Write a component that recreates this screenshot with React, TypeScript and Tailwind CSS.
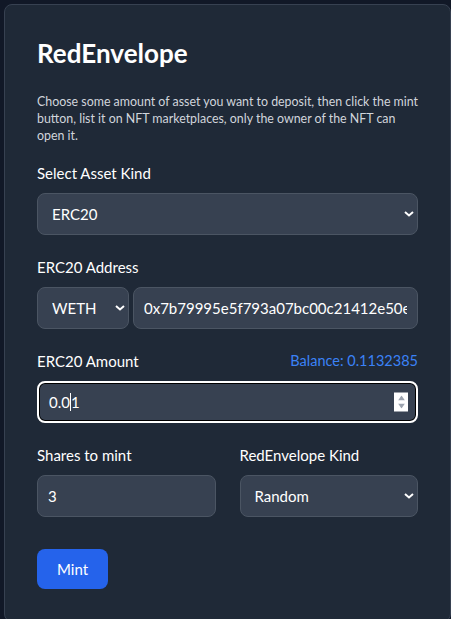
import React from 'react';

const font = { fontFamily: 'Lato, "Open Sans", sans-serif' };

const Chevron = () => (
  <svg className="pointer-events-none absolute right-1 top-1/2 -translate-y-1/2" width="10" height="6" viewBox="0 0 10 6">
    <path d="M1 1 L5 4.5 L9 1" fill="none" stroke="white" strokeWidth="2" />
  </svg>
);

const Spinner = () => (
  <div className="pointer-events-none absolute right-2.5 top-1/2 -translate-y-1/2 w-[14px] h-[19px] bg-white flex flex-col items-center justify-center gap-[3px]">
    <svg width="7" height="5" viewBox="0 0 7 5"><path d="M3.5 0 L7 5 L0 5 Z" fill="#9ca3af" /></svg>
    <svg width="7" height="5" viewBox="0 0 7 5"><path d="M0 0 L7 0 L3.5 5 Z" fill="#9ca3af" /></svg>
  </div>
);

const field = 'block w-full bg-[#374151] border border-[#4b5563] text-white text-[15px] leading-6 rounded-lg py-2 outline-none';
const label = 'block mb-2 text-[15px] leading-6 text-white';

const App: React.FC = () => {
  return (
    <div className="min-h-screen bg-[#111827] pt-1 pl-1" style={font}>
      <div className="w-[447px] bg-[#1f2937] border border-[#374151] rounded-lg p-8">
        <h1 className="text-[26px] leading-8 font-bold text-white mb-6">RedEnvelope</h1>
        <p className="text-[12.4px] leading-[17px] text-gray-300 mb-[17px] whitespace-nowrap">
          Choose some amount of asset you want to deposit, then click the mint
          <br />
          button, list it on NFT marketplaces, only the owner of the NFT can
          <br />
          open it.
        </p>

        {/* Asset kind */}
        <div className="mb-5">
          <label className={label}>Select Asset Kind</label>
          <div className="relative">
            <select className={`${field} appearance-none px-3.5`}>
              <option>ERC20</option>
              <option>ERC721</option>
              <option>ERC1155</option>
            </select>
            <Chevron />
          </div>
        </div>

        {/* Address */}
        <div className="mb-5">
          <label className={label}>ERC20 Address</label>
          <div className="flex gap-1">
            <div className="relative w-[92px] shrink-0">
              <select className={`${field} appearance-none px-3.5`}>
                <option>WETH</option>
                <option>USDC</option>
              </select>
              <Chevron />
            </div>
            <input
              className={`${field} min-w-0 flex-1 px-2.5`}
              defaultValue="0x7b79995e5f793a07bc00c21412e50ecae098e7f9"
            />
          </div>
        </div>

        {/* Amount */}
        <div className="mb-5">
          <div className="flex justify-between items-center mb-2 h-6">
            <label className="text-[15px] text-white">ERC20 Amount</label>
            <span className="text-[14.5px] text-[#3b82f6]">Balance: 0.1132385</span>
          </div>
          <div className="relative">
            <div className="w-full bg-[#374151] border-2 border-white shadow-[inset_0_0_0_1px_black] text-white text-[15px] leading-6 rounded-lg px-2.5 py-[7px] flex items-center">
              0.0<span className="inline-block w-px h-[18px] bg-white" />1
            </div>
            <Spinner />
          </div>
        </div>

        {/* Shares + kind */}
        <div className="grid grid-cols-2 gap-6 mb-8">
          <div>
            <label className={label}>Shares to mint</label>
            <input className={`${field} px-2.5`} defaultValue="3" />
          </div>
          <div>
            <label className={label}>RedEnvelope Kind</label>
            <div className="relative">
              <select className={`${field} appearance-none px-3.5`}>
                <option>Random</option>
                <option>Equal</option>
              </select>
              <Chevron />
            </div>
          </div>
        </div>

        <button className="bg-[#2563eb] text-white text-[15px] leading-6 rounded-lg px-5 py-2">Mint</button>
      </div>
    </div>
  );
};

export default App;
